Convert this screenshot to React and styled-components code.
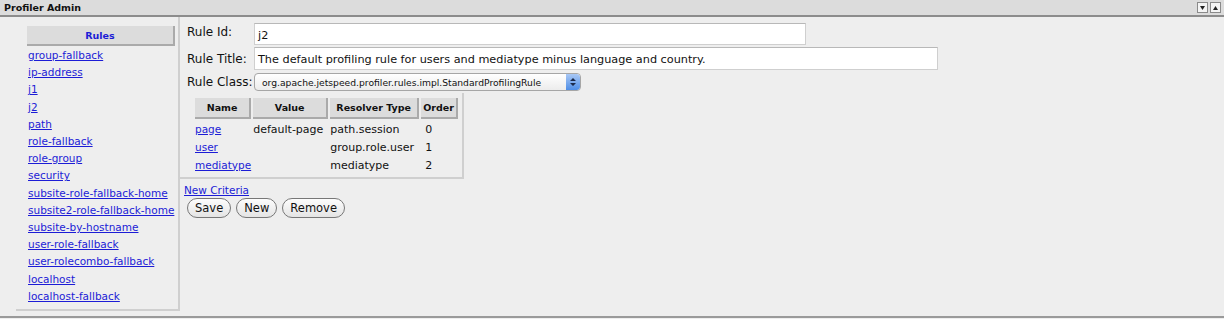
import styled, { createGlobalStyle } from 'styled-components';

const GlobalStyle = createGlobalStyle`
  html, body {
    margin: 0;
    padding: 0;
    background: #eeeeee;
    font-family: "DejaVu Sans", Verdana, sans-serif;
  }
`;

const RULES = [
  'group-fallback',
  'ip-address',
  'j1',
  'j2',
  'path',
  'role-fallback',
  'role-group',
  'security',
  'subsite-role-fallback-home',
  'subsite2-role-fallback-home',
  'subsite-by-hostname',
  'user-role-fallback',
  'user-rolecombo-fallback',
  'localhost',
  'localhost-fallback',
];

const CRITERIA = [
  { name: 'page', value: 'default-page', resolver: 'path.session', order: 0 },
  { name: 'user', value: '', resolver: 'group.role.user', order: 1 },
  { name: 'mediatype', value: '', resolver: 'mediatype', order: 2 },
];

const Portlet = styled.div`
  width: 1224px;
  height: 318px;
  border-bottom: 2px solid #9a9a9a;
  box-sizing: border-box;
  display: flex;
  flex-direction: column;
`;

const TitleBar = styled.div`
  height: 15px;
  background: #dcdcdc;
  border-bottom: 2px solid #8c8c8c;
  display: flex;
  align-items: center;
  justify-content: space-between;
  padding: 0 3px 0 4px;
  font-size: 9.5px;
  font-weight: bold;
  color: #111;
`;

const Controls = styled.div`
  display: flex;
  gap: 2px;
`;

const Ctrl = styled.span`
  width: 9px;
  height: 9px;
  border: 1px solid #8a8a8a;
  background: #f4f4f4;
  display: flex;
  align-items: center;
  justify-content: center;
`;

const Body = styled.div`
  display: flex;
  flex: 1;
  align-items: flex-start;
`;

const Sidebar = styled.div`
  width: 151px;
  margin-left: 16px;
  padding: 9px 0 4px 11px;
  border-right: 2px solid #cfcfcf;
  border-bottom: 2px solid #cfcfcf;
`;

const RulesHeader = styled.div`
  height: 18px;
  width: 146px;
  background: #dcdcdc;
  border-right: 2px solid #aaaaaa;
  border-bottom: 2px solid #aaaaaa;
  display: flex;
  align-items: center;
  justify-content: center;
  font-size: 9.5px;
  font-weight: bold;
  color: #1c1cd6;
  margin-bottom: 1px;
`;

const RuleLink = styled.a`
  display: block;
  font-size: 10.5px;
  line-height: 17.2px;
  color: #1c1cd6;
  text-decoration: underline;
  padding-left: 1px;
  white-space: nowrap;
`;

const Main = styled.div`
  padding: 5px 0 0 7px;
  display: flex;
  flex-direction: column;
`;

const Field = styled.div`
  display: flex;
  align-items: center;
  height: ${(p) => p.h}px;
  margin-bottom: ${(p) => p.mb || 0}px;
  margin-top: ${(p) => p.mt || 0}px;
`;

const Label = styled.span`
  width: 67px;
  font-size: 12px;
  color: #111;
  align-self: ${(p) => (p.top ? 'flex-start' : 'center')};
  padding-top: ${(p) => (p.top ? 2 : 0)}px;
`;

const TextInput = styled.div`
  width: ${(p) => p.w}px;
  height: 100%;
  box-sizing: border-box;
  background: #fff;
  border: 1px solid #cfcfcf;
  border-top-color: #b8b8b8;
  display: flex;
  align-items: center;
  padding: 2px 3px 0;
  font-size: 11.25px;
  color: #111;
  white-space: nowrap;
`;

const Select = styled.div`
  width: 327px;
  height: 18px;
  box-sizing: border-box;
  border: 1px solid #a6a6a6;
  border-radius: 4px;
  background: linear-gradient(#ffffff, #ececec);
  display: flex;
  align-items: center;
  justify-content: space-between;
  padding-left: 7px;
  font-size: 9.2px;
  color: #111;
  overflow: hidden;
  white-space: nowrap;
`;

const SelectArrow = styled.span`
  width: 14px;
  height: 16px;
  flex-shrink: 0;
  border-radius: 0 3px 3px 0;
  background: linear-gradient(#a9c8f5, #4f8ee6);
  display: flex;
  align-items: center;
  justify-content: center;
`;

const TableBox = styled.div`
  align-self: flex-start;
  margin-left: -7px;
  margin-top: 2px;
  padding: 5px 2px 3px 13px;
  border-right: 2px solid #cfcfcf;
  border-bottom: 2px solid #cfcfcf;
`;

const Table = styled.table`
  border-collapse: separate;
  border-spacing: 2px 0;
`;

const Th = styled.th`
  background: #dcdcdc;
  border-right: 2px solid #aaaaaa;
  border-bottom: 2px solid #aaaaaa;
  height: 19px;
  padding: 0 2px;
  width: ${(p) => p.w}px;
  font-size: 9.5px;
  font-weight: bold;
  color: #111;
  text-align: center;
  white-space: nowrap;
`;

const Td = styled.td`
  font-size: 11px;
  height: 18px;
  line-height: 15px;
  padding: ${(p) => (p.first ? 1 : 0)}px 0 0 ${(p) => p.pl || 0}px;
  color: #111;
  white-space: nowrap;
`;

const CellLink = styled.a`
  color: #1c1cd6;
  text-decoration: underline;
  font-size: 10.5px;
`;

const NewCriteria = styled.a`
  align-self: flex-start;
  font-size: 10.5px;
  color: #1c1cd6;
  text-decoration: underline;
  margin-top: 5px;
  margin-left: -3px;
`;

const Buttons = styled.div`
  display: flex;
  gap: 5px;
  margin-top: 2px;
`;

const Button = styled.span`
  height: 20px;
  min-width: ${(p) => p.min || 0}px;
  box-sizing: border-box;
  border: 1px solid #777;
  border-radius: 10px;
  background: linear-gradient(#fdfdfd, #e4e4e4);
  padding: 0 7px;
  display: flex;
  align-items: center;
  justify-content: center;
  font-size: 11.5px;
  color: #111;
`;

function App() {
  return (
    <>
      <GlobalStyle />
      <Portlet>
        <TitleBar>
          <span>Profiler Admin</span>
          <Controls>
            <Ctrl>
              <svg width="5" height="4" viewBox="0 0 5 4">
                <path d="M0 0h5L2.5 4z" fill="#222" />
              </svg>
            </Ctrl>
            <Ctrl>
              <svg width="5" height="4" viewBox="0 0 5 4">
                <path d="M0 4h5L2.5 0z" fill="#222" />
              </svg>
            </Ctrl>
          </Controls>
        </TitleBar>
        <Body>
          <Sidebar>
            <RulesHeader>Rules</RulesHeader>
            {RULES.map((r) => (
              <RuleLink key={r} href="#">
                {r}
              </RuleLink>
            ))}
          </Sidebar>
          <Main>
            <Field h={22} mb={2} mt={1}>
              <Label top>Rule Id:</Label>
              <TextInput w={552}>j2</TextInput>
            </Field>
            <Field h={23} mb={3}>
              <Label>Rule Title:</Label>
              <TextInput w={684}>
                The default profiling rule for users and mediatype minus language and country.
              </TextInput>
            </Field>
            <Field h={18}>
              <Label>Rule Class:</Label>
              <Select>
                org.apache.jetspeed.profiler.rules.impl.StandardProfilingRule
                <SelectArrow>
                  <svg width="6" height="10" viewBox="0 0 6 10">
                    <path d="M0 4h6L3 1zM0 6h6L3 9z" fill="#1b2a4a" />
                  </svg>
                </SelectArrow>
              </Select>
            </Field>
            <TableBox>
              <Table>
                <thead>
                  <tr>
                    <Th w={48}>Name</Th>
                    <Th w={69}>Value</Th>
                    <Th w={83}>Resolver Type</Th>
                    <Th w={28}>Order</Th>
                  </tr>
                </thead>
                <tbody>
                  {CRITERIA.map((c, i) => (
                    <tr key={c.name}>
                      <Td first={i === 0}>
                        <CellLink href="#">{c.name}</CellLink>
                      </Td>
                      <Td first={i === 0}>{c.value}</Td>
                      <Td first={i === 0}>{c.resolver}</Td>
                      <Td first={i === 0} pl={4}>
                        {c.order}
                      </Td>
                    </tr>
                  ))}
                </tbody>
              </Table>
            </TableBox>
            <NewCriteria href="#">New Criteria</NewCriteria>
            <Buttons>
              <Button min={44}>Save</Button>
              <Button>New</Button>
              <Button>Remove</Button>
            </Buttons>
          </Main>
        </Body>
      </Portlet>
    </>
  );
}

export default App;
